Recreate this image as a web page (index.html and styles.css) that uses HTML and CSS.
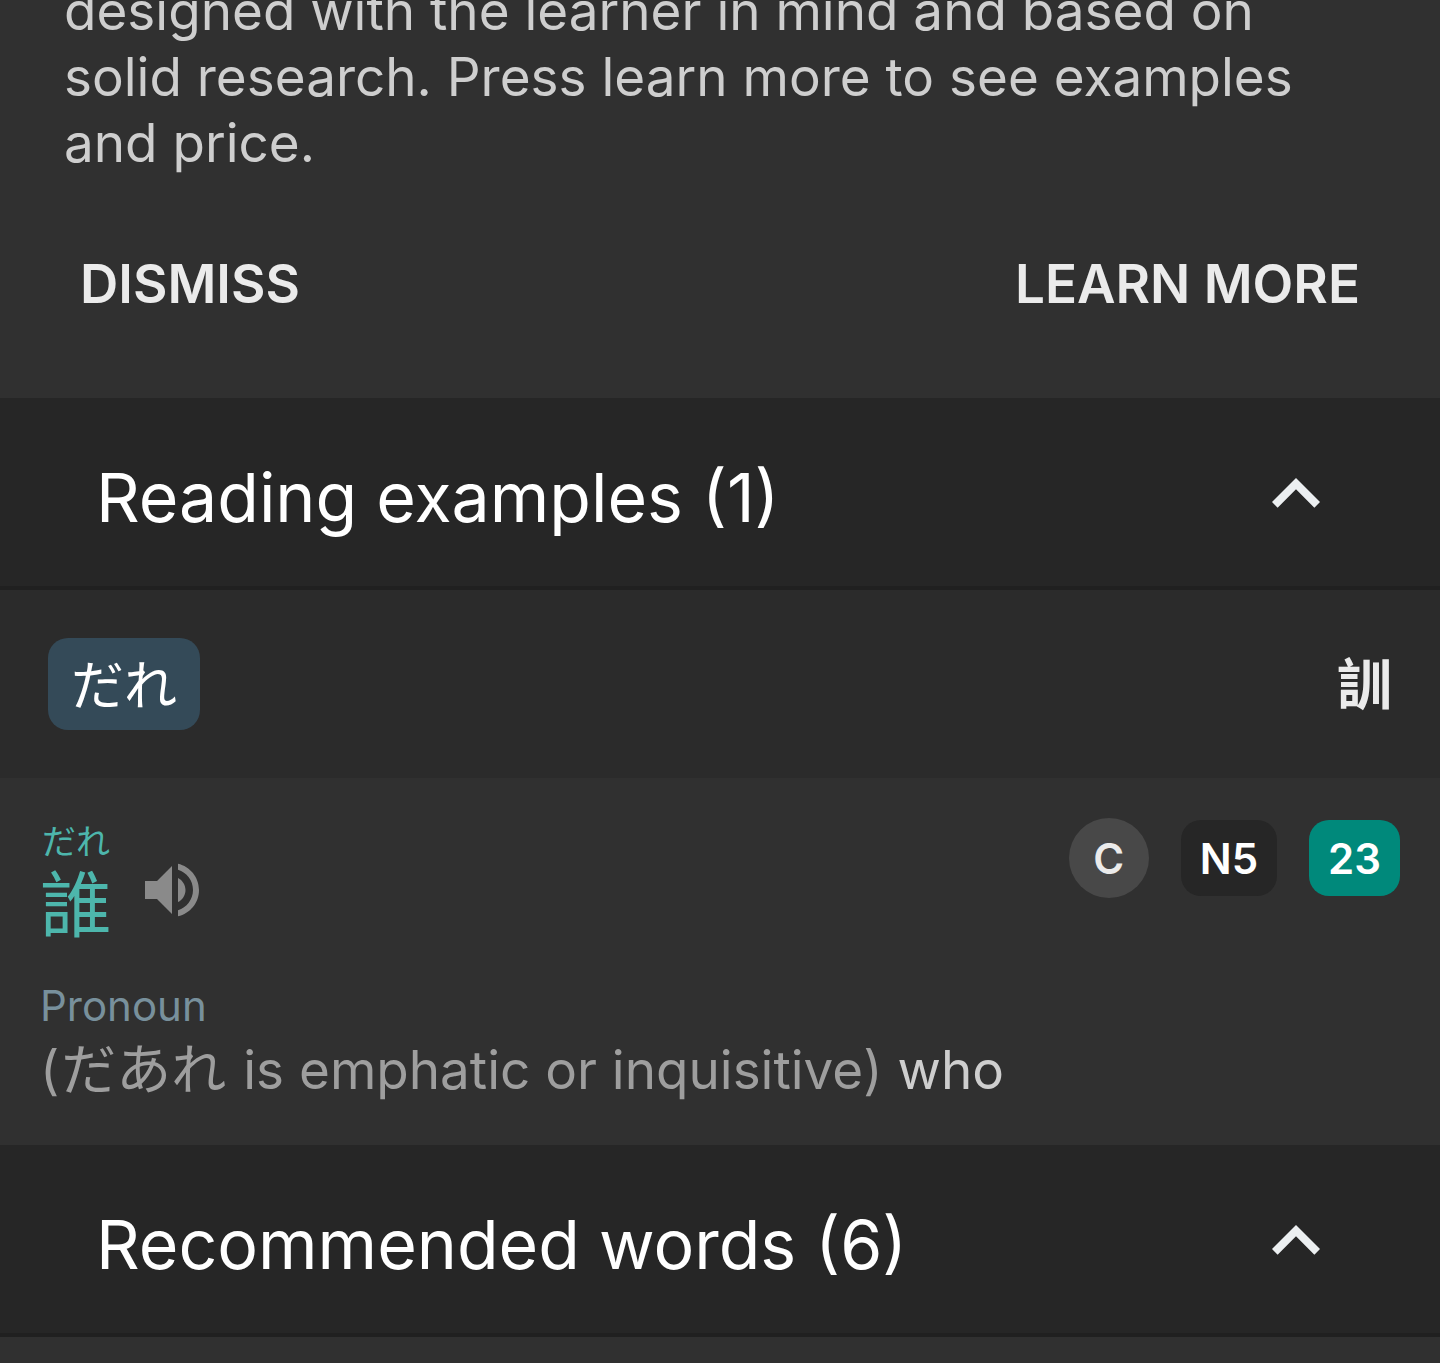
FILE: index.html
```html
<!DOCTYPE html>
<html lang="en">
<head>
    <meta charset="UTF-8">
    <meta name="viewport" content="width=device-width, initial-scale=1.0">
    <title>誰 - Kanji details</title>
    <link rel="stylesheet" href="styles.css">
</head>
<body>
    <section class="promo">
        <p class="promo-text">designed with the learner in mind and based on solid research. Press learn more to see examples and price.</p>
        <div class="promo-actions">
            <button type="button" class="text-button">DISMISS</button>
            <button type="button" class="text-button">LEARN MORE</button>
        </div>
    </section>

    <section>
        <button type="button" class="section-header" aria-expanded="true">
            <span class="section-title">Reading examples (1)</span>
            <svg class="chevron" viewBox="0 0 24 24" aria-hidden="true"><path d="M12 8l-6 6 1.41 1.41L12 10.83l4.59 4.58L18 14z"/></svg>
        </button>

        <div class="reading">
            <span class="reading-chip">だれ</span>
            <span class="reading-type">訓</span>
        </div>

        <article class="word">
            <div class="word-top">
                <div class="word-head">
                    <div class="word-text">
                        <span class="furigana">だれ</span>
                        <span class="kanji">誰</span>
                    </div>
                    <button type="button" class="play" aria-label="Play audio">
                        <svg viewBox="0 0 24 24" aria-hidden="true"><path d="M3 9v6h4l5 5V4L7 9H3zm11-1.03v8.05c1.48-.73 2.5-2.25 2.5-4.02s-1.02-3.29-2.5-4.03zM14 3.23v2.06c2.89.86 5 3.54 5 6.71s-2.11 5.85-5 6.71v2.06c4.01-.91 7-4.49 7-8.77s-2.99-7.86-7-8.77z"/></svg>
                    </button>
                </div>
                <div class="badges">
                    <span class="badge badge-common">C</span>
                    <span class="badge badge-jlpt">N5</span>
                    <span class="badge badge-level">23</span>
                </div>
            </div>
            <p class="pos">Pronoun</p>
            <p class="meaning"><span class="note">(<span class="kana">だあれ</span> is emphatic or inquisitive)</span> who</p>
        </article>
    </section>

    <section>
        <button type="button" class="section-header" aria-expanded="true">
            <span class="section-title">Recommended words (6)</span>
            <svg class="chevron" viewBox="0 0 24 24" aria-hidden="true"><path d="M12 8l-6 6 1.41 1.41L12 10.83l4.59 4.58L18 14z"/></svg>
        </button>
    </section>
</body>
</html>
```

FILE: styles.css
```css
* {
    box-sizing: border-box;
}
html {
    overflow: hidden;
    background-color: #303030;
}
body {
    margin: 0;
    background-color: #303030;
    color: #cecece;
    font-family: Inter, "Noto Sans CJK SC", sans-serif;
    font-size: 53px;
    line-height: 66px;
}
p {
    margin: 0;
}
button {
    padding: 0;
    border: none;
    background: none;
    font-family: inherit;
    cursor: pointer;
}
svg {
    display: block;
    fill: currentColor;
}

/* promo card, its first lines are scrolled off the top */
.promo {
    margin-top: -22px;
    padding-bottom: 66px;
}
.promo-text {
    padding: 0 96px 0 64px;
}
.promo-actions {
    display: flex;
    justify-content: space-between;
    margin-top: 60px;
    padding: 0 80px;
}
.text-button {
    height: 96px;
    color: #ebebeb;
    font-size: 53px;
    font-weight: 600;
}

.section-header {
    display: flex;
    align-items: center;
    justify-content: space-between;
    width: 100%;
    padding: 48px 96px 44px;
    border-bottom: 4px solid #202020;
    background-color: #262626;
    color: #fff;
    font-size: 68px;
    line-height: 84px;
    text-align: left;
}
.section-title {
    padding-top: 6px;
}
.chevron {
    width: 96px;
    height: 96px;
    color: #eceff1;
}

.reading {
    display: flex;
    align-items: center;
    justify-content: space-between;
    padding: 48px;
    background-color: #2b2b2b;
}
.reading-chip {
    padding: 15px 23px 11px;
    border-radius: 20px;
    background-color: #344a58;
    color: #fff;
}
.reading-type {
    color: #ebebeb;
    font-size: 55px;
    font-weight: bold;
}

.word {
    padding: 40px 40px 42px;
}
.word-top {
    display: flex;
    align-items: flex-start;
    justify-content: space-between;
}
.word-head {
    display: flex;
    align-items: flex-end;
    gap: 24px;
}
.word-text {
    display: flex;
    flex-direction: column;
    align-items: center;
    color: #4db6ac;
    font-family: "Noto Sans CJK SC", sans-serif;
}
.furigana {
    font-size: 34px;
    line-height: 44px;
}
.kanji {
    font-size: 72px;
    line-height: 76px;
}
.play {
    padding-bottom: 12px;
    color: #8a8a8a;
}
.play svg {
    width: 72px;
    height: 72px;
}
.badges {
    display: flex;
    align-items: center;
    gap: 32px;
    color: #fff;
    font-size: 42px;
    font-weight: 600;
}
.badge {
    padding: 2px 19px 0;
    border-radius: 20px;
    line-height: 74px;
}
.badge-common {
    width: 80px;
    padding: 2px 0 0;
    border-radius: 50%;
    background-color: #484848;
    color: #ebebeb;
    line-height: 78px;
    text-align: center;
}
.badge-jlpt {
    background-color: #262626;
}
.badge-level {
    background-color: #00897b;
}
.pos {
    margin-top: 38px;
    color: #78909c;
    font-size: 42px;
    line-height: 60px;
}
.note {
    color: #9e9e9e;
}
.kana {
    margin: 0 2px;
    font-size: 55px;
}
```
